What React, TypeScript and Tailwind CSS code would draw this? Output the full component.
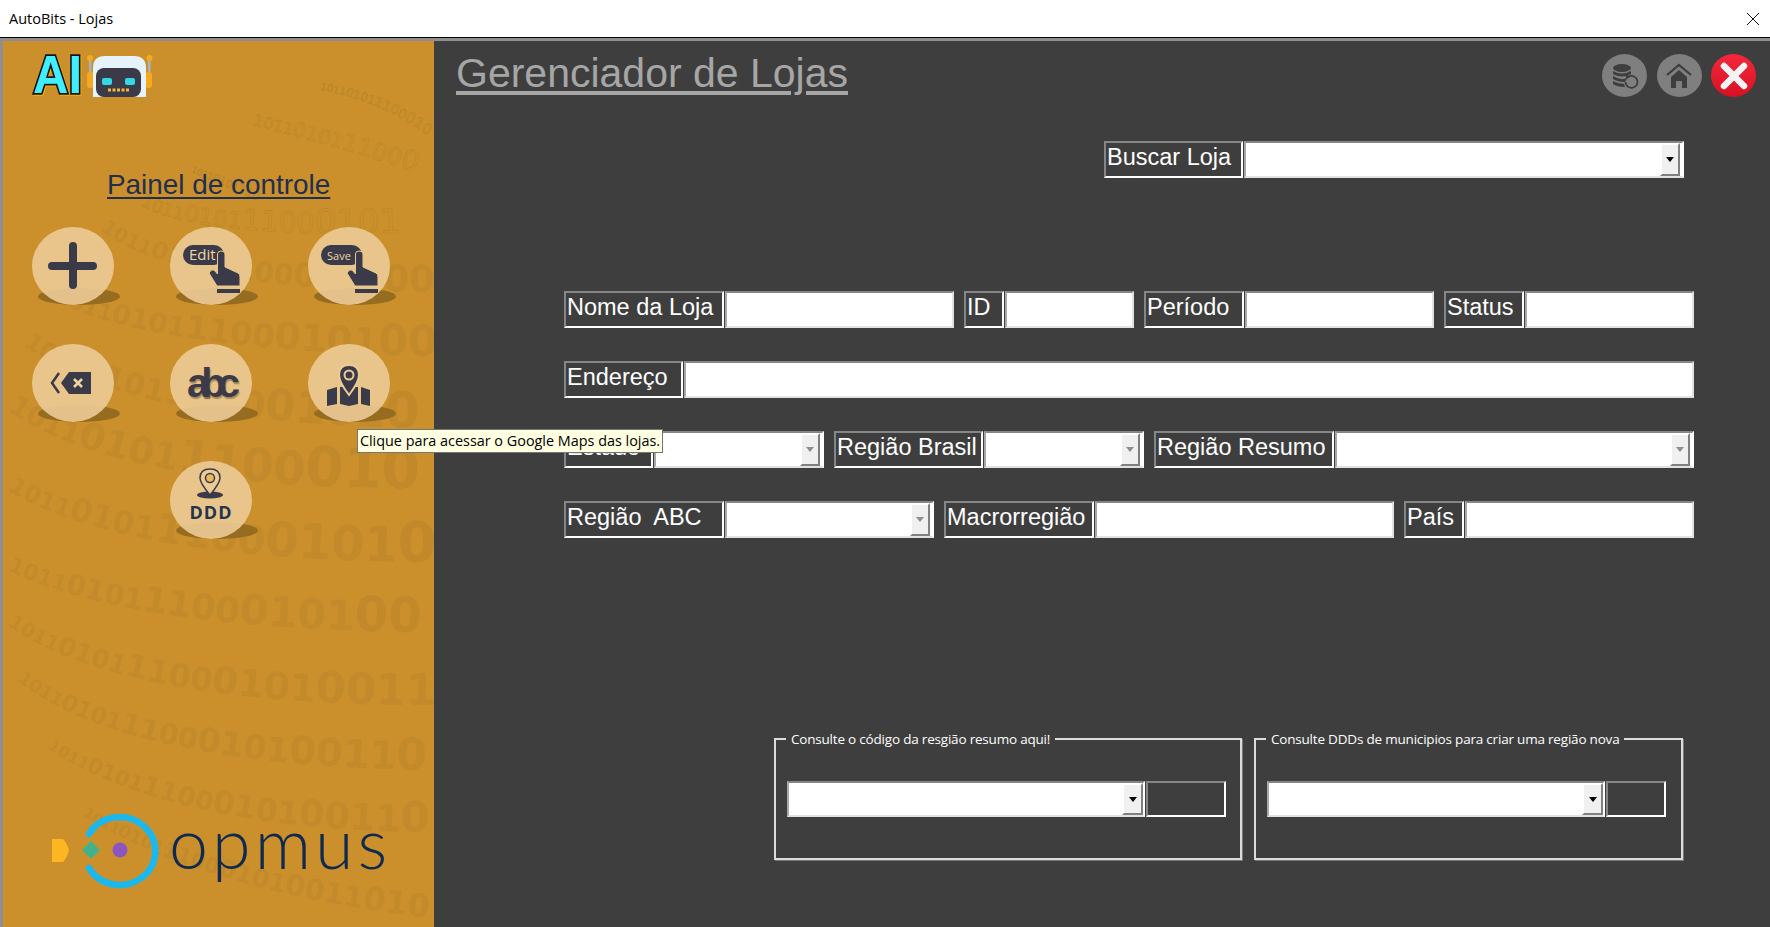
import React from 'react';

const binaryDigits = '1011010111000101001101011001010010110100110101100101';

const binaryLines = [
  { d: 'M320 90 Q380 100 428 136', len: 125, from: 10, to: 16, thin: true },
  { d: 'M252 125 Q350 150 428 176', len: 185, from: 16, to: 28, thin: true },
  { d: 'M191 172 Q225 185 265 205', len: 80, from: 9, to: 13, thin: true },
  { d: 'M140 205 Q200 240 428 232', len: 295, from: 18, to: 38, thin: true },
  { d: 'M100 230 Q180 290 428 292', len: 340, from: 20, to: 38 },
  { d: 'M53 300 Q150 350 428 356', len: 385, from: 22, to: 44 },
  { d: 'M23 345 Q130 425 428 428', len: 415, from: 24, to: 50 },
  { d: 'M7 410 Q120 490 428 488', len: 430, from: 28, to: 60 },
  { d: 'M7 490 Q120 560 428 562', len: 430, from: 24, to: 56 },
  { d: 'M7 570 Q130 630 428 632', len: 428, from: 22, to: 50 },
  { d: 'M7 625 Q120 705 428 705', len: 430, from: 20, to: 48 },
  { d: 'M17 680 Q120 765 428 770', len: 420, from: 18, to: 44 },
  { d: 'M47 748 Q170 830 428 832', len: 390, from: 16, to: 42 },
  { d: 'M83 815 Q200 890 428 918', len: 360, from: 14, to: 34 },
];

function chunksFor(len: number, from: number, to: number) {
  const count = Math.floor(len / (((from + to) / 2) * 0.63));
  const text = binaryDigits.slice(0, count);
  const out: { text: string; size: number }[] = [];
  for (let k = 0; k < text.length; k += 4) {
    out.push({ text: text.slice(k, k + 4), size: from + ((to - from) * k) / Math.max(text.length - 1, 1) });
  }
  return out;
}

function BinaryBackground() {
  return (
    <svg aria-hidden="true" viewBox="3 41 431 886" className="absolute inset-0 w-full h-full">
      <defs>
        {binaryLines.map((line, i) => (
          <path key={i} id={`bin-${i}`} d={line.d} />
        ))}
      </defs>
      {binaryLines.map((line, i) => (
        <text
          key={i}
          fontFamily="'DejaVu Sans', sans-serif"
          fontWeight={line.thin ? 400 : 700}
          fill={line.thin ? 'none' : '#a9762c'}
          fillOpacity={line.thin ? 0 : 0.24}
          stroke={line.thin ? '#8f6a2a' : 'none'}
          strokeOpacity={0.32}
          strokeWidth={0.6}
        >
          <textPath href={`#bin-${i}`}>
            {chunksFor(line.len, line.from, line.to).map((chunk, k) => (
              <tspan key={k} fontSize={chunk.size}>
                {chunk.text}
              </tspan>
            ))}
          </textPath>
        </text>
      ))}
    </svg>
  );
}

function AiLogo() {
  return (
    <svg viewBox="29 52 126 46" className="w-[126px] h-[46px]">
      <text
        x="33"
        y="93"
        fontFamily="'Liberation Sans', sans-serif"
        fontWeight="700"
        fontSize="53"
        textLength="49"
        lengthAdjust="spacingAndGlyphs"
        fill="#3fefff"
        stroke="#14141c"
        strokeWidth="3.500"
        paintOrder="stroke"
        className="[filter:drop-shadow(1px_1px_0_#f9b000)]"
      >
        AI
      </text>
      <rect x="89" y="60" width="2.500" height="14" fill="#a9b3c0" />
      <rect x="148" y="60" width="2.500" height="14" fill="#a9b3c0" />
      <circle cx="90" cy="58" r="3" fill="#f4a91f" />
      <circle cx="149.500" cy="58" r="3" fill="#f4a91f" />
      <rect x="87" y="72" width="7" height="16" rx="3" fill="#f4a91f" />
      <rect x="145" y="72" width="7" height="16" rx="3" fill="#f4a91f" />
      <path d="M93 97 V68 Q93 56 105 56 H134 Q146 56 146 68 V97 Z" fill="#e6f3fa" />
      <rect x="96" y="68" width="45" height="29" rx="8" fill="#3a3a48" />
      <rect x="102" y="78" width="10" height="7" rx="2" fill="#35d6e6" />
      <rect x="125" y="78" width="10" height="7" rx="2" fill="#35d6e6" />
      {[108, 112.5, 117, 121.5, 126].map(x => (
        <rect key={x} x={x} y="88.500" width="3" height="3" fill="#f4b63a" />
      ))}
    </svg>
  );
}

function PressIcon({ word, size }: { word: string; size: number }) {
  return (
    <svg viewBox="0 0 82 78" className="absolute inset-0 w-full h-full">
      <rect x="13" y="18" width="41" height="20" rx="10" fill="#3a3a48" />
      <text x="19" y="33" fontFamily="'Open Sans', sans-serif" fontSize={size} fill="#f1d5a0">
        {word}
      </text>
      <path
        d="M47.500 27 Q47.500 24 51 24 Q55 24 55 27 V40 L68 46 Q70 47 70 50 V59 H47 L39 46 Q41 42 44 43 L47.500 47 Z"
        fill="#3a3a48"
        stroke="#e9c78e"
        strokeWidth="1"
      />
      <rect x="47" y="62" width="23" height="4" fill="#3a3a48" />
    </svg>
  );
}

function CircleButton({ children }: { children?: React.ReactNode }) {
  return (
    <div className="relative w-[82px] h-[78px]">
      <div className="absolute left-[6px] bottom-0 w-[82px] h-[17px] rounded-[50%] bg-[#966c20]" />
      <div className="absolute inset-0 rounded-[50%] bg-[#eccb96]/90">{children}</div>
    </div>
  );
}

function Sidebar() {
  return (
    <div className="relative w-[431px] h-full shrink-0 overflow-hidden bg-[#cb902b] flex flex-col pt-[11px] pl-[26px]">
      <BinaryBackground />
      <div className="relative h-[46px]">
        <AiLogo />
      </div>
      <p className="relative mt-[70px] ml-[78px] text-[27.900px] leading-[34px] underline underline-offset-[3px] text-[#1f2f50] font-['Liberation_Sans',sans-serif]">
        Painel de controle
      </p>
      <div className="relative mt-[25px] ml-[3px] grid grid-cols-[82px_82px_82px] gap-x-[56px] gap-y-[39px]">
        <CircleButton>
          <svg viewBox="0 0 82 78" className="absolute inset-0 w-full h-full">
            <path d="M20 39 H61 M41 19 V58" stroke="#3a3a48" strokeWidth="8" strokeLinecap="round" />
          </svg>
        </CircleButton>
        <CircleButton>
          <PressIcon word="Edit" size={15} />
        </CircleButton>
        <CircleButton>
          <PressIcon word="Save" size={11} />
        </CircleButton>
        <CircleButton>
          <svg viewBox="0 0 82 78" className="absolute inset-0 w-full h-full">
            <path d="M27 29 L20 39 L27 49" fill="none" stroke="#3a3a48" strokeWidth="2.500" />
            <path d="M29 39 L37 28 H59 V50 H37 Z" fill="#3a3a48" />
            <path d="M42 35 L50 43 M50 35 L42 43" stroke="#f1d5a0" strokeWidth="2.500" />
          </svg>
        </CircleButton>
        <CircleButton>
          <span className="absolute left-[17px] top-[16px] text-[40px] leading-[46px] font-bold tracking-[-8px] text-[#3a3a48] font-['Liberation_Sans',sans-serif] [text-shadow:1px_2px_1px_rgba(90,70,40,0.45)]">
            abc
          </span>
        </CircleButton>
        <CircleButton>
          <svg viewBox="0 0 82 78" className="absolute inset-0 w-full h-full">
            <path
              d="M19 46 L29 43 V60 L19 62 Z M32 43 L50 43 V60 L41 62 L32 60 Z M53 43 L62 46 V62 L53 60 Z"
              fill="#3a3a48"
            />
            <path
              d="M41 51 Q31 38 31 31 Q31 21 41 21 Q51 21 51 31 Q51 38 41 51 Z"
              fill="#3a3a48"
              stroke="#eccb96"
              strokeWidth="2"
            />
            <circle cx="41" cy="31" r="4.500" fill="none" stroke="#eccb96" strokeWidth="2" />
          </svg>
        </CircleButton>
        <div />
        <CircleButton>
          <svg viewBox="0 0 82 78" className="absolute inset-0 w-full h-full">
            <ellipse cx="40" cy="34" rx="13" ry="3.500" fill="#3a3a48" />
            <path
              d="M40 34 Q30 22 30 17 Q30 8 40 8 Q50 8 50 17 Q50 22 40 34 Z"
              fill="#eccb96"
              stroke="#3a3a48"
              strokeWidth="1.500"
            />
            <circle cx="40" cy="17" r="4.500" fill="#e8b95f" stroke="#3a3a48" strokeWidth="1.500" />
            <text
              x="41"
              y="58"
              textAnchor="middle"
              fontFamily="'Open Sans', sans-serif"
              fontWeight="700"
              fontSize="18"
              letterSpacing="1"
              fill="#26334f"
            >
              DDD
            </text>
          </svg>
        </CircleButton>
      </div>
      <div className="relative mt-[273px] ml-[23px] flex items-start">
        <svg viewBox="52 810 120 78" className="w-[120px] h-[78px] shrink-0">
          <path d="M52 837 H63 Q67 841 69 848 Q67 856 63 860 H52 Z" fill="#fbb622" />
          <path d="M91 839 L100 848 L91 857 L82 848 Z" fill="#41b28c" />
          <circle cx="120" cy="848" r="7.500" fill="#8d55c0" />
          <path
            d="M89 832 A35.500 34 0 1 1 89 866"
            fill="none"
            stroke="#1bb8ee"
            strokeWidth="6.500"
            strokeLinecap="round"
          />
        </svg>
        <span className="-ml-[3px] -mt-[5px] text-[70px] leading-[70px] tracking-[4px] font-light text-[#0f2a50] font-['Lato',sans-serif]">
          opmus
        </span>
      </div>
    </div>
  );
}

function Arrow({ muted }: { muted?: boolean }) {
  return (
    <svg viewBox="0 0 8 5" className="w-[8px] h-[5px]">
      <path d="M0 0 H8 L4 5 Z" fill={muted ? '#8e8e8e' : '#000000'} />
    </svg>
  );
}

function Label({ text, className }: { text?: string; className: string }) {
  return (
    <div
      className={`shrink-0 h-full overflow-hidden whitespace-pre pl-[1px] text-[23.500px] leading-[28px] text-white bg-[#3e3e3e] border-2 border-t-[#868686] border-l-[#868686] border-r-white border-b-white font-['Liberation_Sans',sans-serif] ${className}`}
    >
      {text}
    </div>
  );
}

function Box() {
  return (
    <div className="flex-1 h-full bg-white border-2 border-t-[#868686] border-l-[#a8a8a8] border-r-[#e2e2e2] border-b-[#e2e2e2]" />
  );
}

function Combo({ muted, flush }: { muted?: boolean; flush?: boolean }) {
  return (
    <div className="flex-1 h-full flex bg-white border-2 border-t-[#868686] border-l-[#a8a8a8] border-r-white border-b-[#e2e2e2]">
      <div className="flex-1" />
      <div
        className={`h-full flex items-center justify-center bg-[#f0f0f0] border-2 border-t-white border-l-white border-r-[#808080] border-b-[#808080] ${
          flush ? 'w-[21px]' : 'w-[20px] mr-[2px]'
        }`}
      >
        <Arrow muted={muted} />
      </div>
    </div>
  );
}

function Field({
  label,
  width,
  labelWidth,
  combo,
  muted,
}: {
  label: string;
  width: string;
  labelWidth: string;
  combo?: boolean;
  muted?: boolean;
}) {
  return (
    <div className={`flex gap-[1px] h-[37px] shrink-0 ${width}`}>
      <Label text={label} className={labelWidth} />
      {combo ? <Combo muted={muted} /> : <Box />}
    </div>
  );
}

function ConsultGroup({
  title,
  className,
  selectWidth,
  codeWidth,
}: {
  title: string;
  className: string;
  selectWidth: string;
  codeWidth: string;
}) {
  return (
    <fieldset className={`h-[131px] border-2 border-[#dcdcdc] pl-[11px] shadow-[1px_1px_0_#777777] ${className}`}>
      <legend className="-ml-[1px] px-[5px] text-[13.500px] tracking-[-0.2px] leading-[20px] text-white font-['Open_Sans',sans-serif]">
        {title}
      </legend>
      <div className="mt-[32px] flex gap-[1px] h-[36px]">
        <div className={`h-full flex ${selectWidth}`}>
          <Combo flush />
        </div>
        <Label className={codeWidth} />
      </div>
    </fieldset>
  );
}

export default function App() {
  return (
    <div className="relative w-full h-screen overflow-hidden flex flex-col bg-[#3e3e3e]">
      <div className="shrink-0 h-[37px] bg-white flex items-center justify-between pl-[9px] pr-[10px]">
        <span className="text-[14.500px] text-black font-['Open_Sans',sans-serif]">AutoBits - Lojas</span>
        <svg viewBox="0 0 14 14" className="w-[14px] h-[14px]">
          <path d="M1 1 L13 13 M13 1 L1 13" stroke="#111111" strokeWidth="1" />
        </svg>
      </div>
      <div className="shrink-0 h-[1px] bg-black" />
      <div className="shrink-0 h-[3px] bg-[#8f8f8f]" />
      <div className="flex-1 min-h-0 flex border-l-[3px] border-[#8f8f8f]">
        <Sidebar />
        <div className="flex-1 min-w-0 flex flex-col pt-[13px]">
          <div className="h-[43px] flex items-start justify-between pl-[22px] pr-[14px]">
            <h1 className="text-[41px] leading-[38px] underline underline-offset-[4px] text-[#a6a6a6] font-['Liberation_Sans',sans-serif]">
              Gerenciador de Lojas
            </h1>
            <div className="flex gap-[9.500px]">
              <div className="w-[45px] h-[43px] rounded-[50%] bg-[#7f7f7f] flex items-center justify-center">
                <svg viewBox="0 0 32 30" className="w-[32px] h-[30px]">
                  <ellipse cx="13" cy="7" rx="9" ry="4" fill="#3e3e3e" />
                  <path
                    d="M4 10 Q13 15 22 10 V13 Q13 18 4 13 Z M4 15 Q12 20 18 17 L16 21 Q9 21 4 18 Z M4 20 Q9 23 15 23 L16 26 Q8 26 4 23 Z"
                    fill="#3e3e3e"
                  />
                  <path d="M19 16 A6 6 0 1 1 16.500 21" fill="none" stroke="#3e3e3e" strokeWidth="1.800" />
                  <path d="M17 13 L21 16 L17 18.500 Z" fill="#3e3e3e" />
                </svg>
              </div>
              <div className="w-[45px] h-[43px] rounded-[50%] bg-[#7f7f7f] flex items-center justify-center">
                <svg viewBox="0 0 28 26" className="w-[28px] h-[26px]">
                  <path d="M2 12 L14 2 L26 12" fill="none" stroke="#3e3e3e" strokeWidth="2.200" />
                  <path d="M6 14 L14 7 L22 14 V25 H17 V18 H11 V25 H6 Z" fill="#3e3e3e" />
                </svg>
              </div>
              <div className="w-[45px] h-[43px] rounded-[50%] bg-gradient-to-b from-[#f4283a] to-[#d80f24] flex items-center justify-center">
                <svg viewBox="0 0 28 28" className="w-[28px] h-[28px]">
                  <path d="M4 4 L24 24 M24 4 L4 24" stroke="#f4f4f4" strokeWidth="6.500" strokeLinecap="round" />
                </svg>
              </div>
            </div>
          </div>

          <div className="mt-[44px] flex justify-end pr-[86px]">
            <Field label="Buscar Loja" width="w-[580px]" labelWidth="w-[139px]" combo />
          </div>

          <div className="mt-[113px] ml-[130px] w-[1130px] flex flex-col gap-y-[33px]">
            <div className="flex gap-[10px]">
              <Field label="Nome da Loja" width="w-[390px]" labelWidth="w-[160px]" />
              <Field label="ID" width="w-[170px]" labelWidth="w-[40px]" />
              <Field label="Período" width="w-[290px]" labelWidth="w-[100px]" />
              <Field label="Status" width="w-[250px]" labelWidth="w-[80px]" />
            </div>
            <div className="flex gap-[10px]">
              <Field label="Endereço" width="w-[1130px]" labelWidth="w-[119px]" />
            </div>
            <div className="flex gap-[10px]">
              <Field label="Estado" width="w-[260px]" labelWidth="w-[89px]" combo muted />
              <Field label="Região Brasil" width="w-[310px]" labelWidth="w-[149px]" combo muted />
              <Field label="Região Resumo" width="w-[540px]" labelWidth="w-[180px]" combo muted />
            </div>
            <div className="flex gap-[10px]">
              <Field label="Região  ABC" width="w-[370px]" labelWidth="w-[160px]" combo muted />
              <Field label="Macrorregião" width="w-[450px]" labelWidth="w-[150px]" />
              <Field label="País" width="w-[290px]" labelWidth="w-[60px]" />
            </div>
          </div>

          <div className="mt-[191px] ml-[340px] flex gap-[12px]">
            <ConsultGroup
              title="Consulte o código da resgião resumo aqui!"
              className="w-[468px]"
              selectWidth="w-[358px]"
              codeWidth="w-[80px]"
            />
            <ConsultGroup
              title="Consulte DDDs de municipios para criar uma região nova"
              className="w-[429px]"
              selectWidth="w-[338px]"
              codeWidth="w-[60px]"
            />
          </div>
        </div>
      </div>

      <div className="absolute left-[357px] top-[429px] h-[24px] w-[306px] flex items-center justify-center bg-[#ffffe1] border border-[#767676] text-[14.400px] text-black whitespace-nowrap font-['Open_Sans',sans-serif]">
        Clique para acessar o Google Maps das lojas.
      </div>
    </div>
  );
}
